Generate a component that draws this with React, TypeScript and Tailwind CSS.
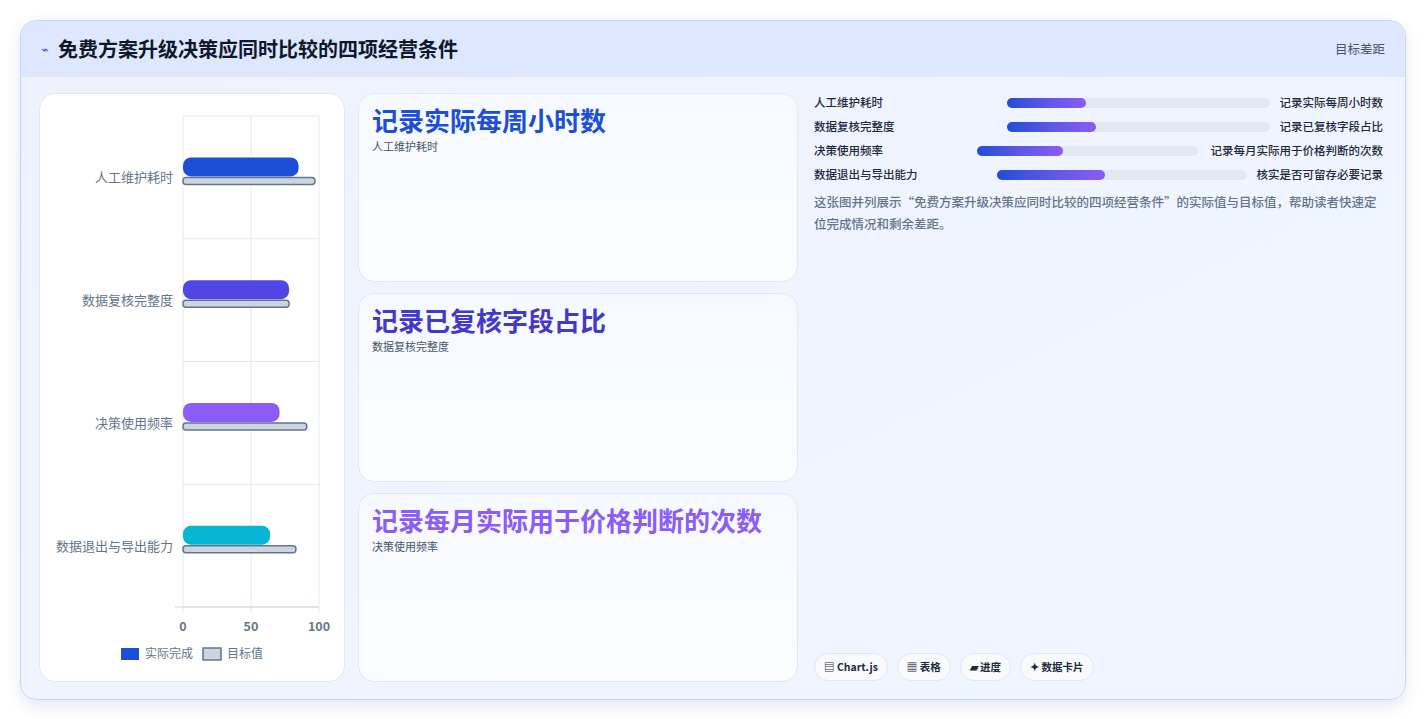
const font = { fontFamily: '"Noto Sans CJK SC", "Noto Sans", sans-serif' };

const rows = [
  { label: "人工维护耗时", note: "记录实际每周小时数", actual: 85, target: 97, color: "#1d4ed8", ml: 193, w: 263, pct: 30 },
  { label: "数据复核完整度", note: "记录已复核字段占比", actual: 78, target: 78, color: "#4f46e5", ml: 193, w: 263, pct: 34 },
  { label: "决策使用频率", note: "记录每月实际用于价格判断的次数", actual: 71, target: 91, color: "#8b5cf6", ml: 163, w: 221, pct: 39 },
  { label: "数据退出与导出能力", note: "核实是否可留存必要记录", actual: 64, target: 83, color: "#06b6d4", ml: 183, w: 250, pct: 43 },
];

const cards = [
  { title: "记录实际每周小时数", sub: "人工维护耗时", color: "text-[#1d4ed8]" },
  { title: "记录已复核字段占比", sub: "数据复核完整度", color: "text-[#4338ca]" },
  { title: "记录每月实际用于价格判断的次数", sub: "决策使用频率", color: "text-[#8b5cf6]" },
];

function Chart() {
  const x0 = 143, pw = 136, top = 22, ph = 491;
  const rh = ph / 4;
  return (
    <svg width="305" height="588" className="block">
      {[0, 50, 100].map((v) => (
        <line key={v} x1={x0 + (pw * v) / 100} x2={x0 + (pw * v) / 100} y1={top} y2={top + ph + 6} stroke="#e2e8f0" />
      ))}
      {[0, 1, 2, 3, 4].map((i) => (
        <line key={i} x1={x0} x2={x0 + pw} y1={top + i * rh} y2={top + i * rh} stroke="#e2e8f0" />
      ))}
      <line x1={x0 - 8} x2={x0 + pw} y1={top + ph} y2={top + ph} stroke="#cbd5e1" />
      {rows.map((r, i) => {
        const cy = top + i * rh + rh / 2;
        return (
          <g key={r.label}>
            <text x={x0 - 10} y={cy + 5} textAnchor="end" fontSize="13" fill="#64748b" style={font}>{r.label}</text>
            <rect x={x0} y={cy - 20} width={(pw * r.actual) / 100} height={19} rx={8} fill={r.color} />
            <rect x={x0} y={cy} width={(pw * r.target) / 100} height={7} rx={3} fill="#cbd5e1" stroke="#64748b" strokeWidth="1.5" />
          </g>
        );
      })}
      {[0, 50, 100].map((v) => (
        <text key={v} x={x0 + (pw * v) / 100} y={top + ph + 24} textAnchor="middle" fontSize="12.5" fontWeight="700" fill="#64748b" style={font}>{v}</text>
      ))}
      <rect x="81" y="554" width="18" height="12" fill="#1d4ed8" />
      <text x="105" y="564" fontSize="12" fill="#64748b" style={font}>实际完成</text>
      <rect x="163" y="554" width="18" height="12" fill="#cbd5e1" stroke="#64748b" strokeWidth="1.5" />
      <text x="187" y="564" fontSize="12" fill="#64748b" style={font}>目标值</text>
    </svg>
  );
}

export default function App() {
  return (
    <div className="min-h-[719px] bg-white p-5" style={font}>
      <div className="h-[680px] overflow-hidden rounded-2xl border border-[#c7d2fe] bg-gradient-to-br from-[#eef2fe] to-[#f0f6ff] shadow-[0_6px_16px_rgba(30,64,175,0.12)]">
        <div className="flex h-[56px] items-center justify-between bg-[#dde7fd] pl-[20px] pr-5">
          <div className="flex items-center gap-[9px]">
            <span className="text-[13px] text-[#3b5bdb]">⌁</span>
            <h1 className="text-[20px] font-bold text-[#0f172a]">免费方案升级决策应同时比较的四项经营条件</h1>
          </div>
          <span className="text-[12.5px] text-[#475569]">目标差距</span>
        </div>
        <div className="flex gap-[13px] px-[18px] pt-4">
          <div className="h-[589px] w-[306px] shrink-0 rounded-2xl border border-[#e2e8f0] bg-white">
            <Chart />
          </div>
          <div className="flex w-[440px] shrink-0 flex-col gap-[11px]">
            {cards.map((c) => (
              <div key={c.title} className="h-[189px] rounded-2xl border border-[#e2e8f0] bg-gradient-to-b from-[#f6f9ff] to-[#fcfdff] px-[13px] pt-[7px]">
                <div className={`text-[26px] font-bold leading-[37px] ${c.color}`}>{c.title}</div>
                <div className="text-[11px] text-[#475569]">{c.sub}</div>
              </div>
            ))}
          </div>
          <div className="flex h-[589px] flex-1 flex-col pl-[3px] pr-[4px]">
            <div className="flex flex-col gap-[7px] pt-[1px]">
              {rows.map((r) => (
                <div key={r.label} className="relative flex h-[17px] items-center justify-between text-[11.5px] font-medium text-[#1e293b]">
                  <span>{r.label}</span>
                  <div className="absolute top-[4px] h-[10px] rounded-full bg-[#e2e8f0]" style={{ left: r.ml, width: r.w }}>
                    <div className="h-full rounded-full bg-gradient-to-r from-[#1d4ed8] to-[#8b5cf6]" style={{ width: `${r.pct}%` }} />
                  </div>
                  <span>{r.note}</span>
                </div>
              ))}
            </div>
            <p className="mt-[8px] text-[12.5px] font-medium leading-[22px] text-[#64748b]">
              这张图并列展示“免费方案升级决策应同时比较的四项经营条件”的实际值与目标值，帮助读者快速定位完成情况和剩余差距。
            </p>
            <div className="mt-auto flex gap-[9px] pb-[1px]">
              {["▤ Chart.js", "▦ 表格", "▰ 进度", "✦ 数据卡片"].map((t) => (
                <span key={t} className="rounded-full border border-[#e2e8f0] bg-[#f8fafc] px-[9px] py-[5px] text-[10.5px] font-bold text-[#1e293b]">{t}</span>
              ))}
            </div>
          </div>
        </div>
      </div>
    </div>
  );
}
